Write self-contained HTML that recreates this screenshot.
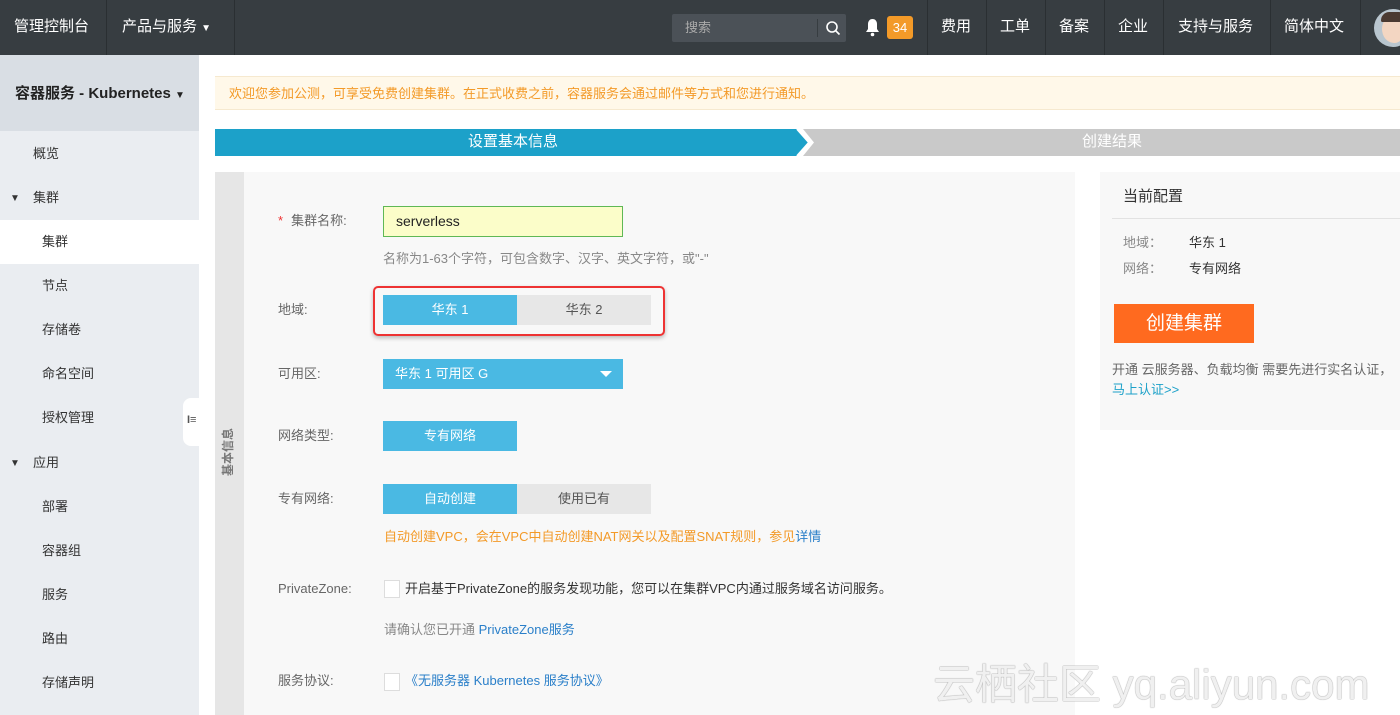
<!DOCTYPE html>
<html><head><meta charset="utf-8"><style>
*{margin:0;padding:0;box-sizing:border-box}
body{width:1400px;height:715px;overflow:hidden;position:relative;background:#fff;font-family:"Liberation Sans","Noto Sans CJK SC",sans-serif;font-size:13px;color:#333;line-height:1.2}
.a{position:absolute}
.top{left:0;top:0;width:1400px;height:55px;background:#373d41;color:#fff;font-size:15px}
.top .t{position:absolute;top:18px;white-space:nowrap}
.dv{position:absolute;top:0;width:1px;height:55px;background:#2a2f32}
.side{left:0;top:55px;width:199px;height:660px;background:#eaedf1}
.si{position:absolute;left:42px;font-size:13px;color:#333}
.lab{position:absolute;left:278px;color:#666;font-size:13px}
.btn{position:absolute;height:30px;line-height:30px;text-align:center;font-size:13px}
.bl{background:#4ab9e3;color:#fff}
.gr{background:#e7e7e7;color:#555}
</style></head><body>
<div class="a top">
 <div class="t" style="left:14px">管理控制台</div>
 <div class="dv" style="left:106px"></div>
 <div class="t" style="left:122px">产品与服务 <span style="font-size:10px">▼</span></div>
 <div class="dv" style="left:234px"></div>
 <div class="a" style="left:672px;top:14px;width:174px;height:28px;background:#4b5157;border-radius:2px"></div>
 <div class="t" style="left:685px;top:20px;font-size:13px;color:#aaa">搜索</div>
 <div class="a" style="left:817px;top:19px;width:1px;height:18px;background:#373d41"></div>
 <svg class="a" style="left:825px;top:20px" width="16" height="16" viewBox="0 0 16 16"><circle cx="7" cy="7" r="5" fill="none" stroke="#fff" stroke-width="1.6"/><path d="M11 11l3.5 3.5" stroke="#fff" stroke-width="1.6"/></svg>
 <svg class="a" style="left:865px;top:18px" width="15" height="19" viewBox="0 0 15 19"><path d="M7.5 1c-3 0-4.5 2.5-4.5 5v5l-2 3h13l-2-3V6c0-2.5-1.5-5-4.5-5z" fill="#fff"/><circle cx="7.5" cy="16.5" r="1.8" fill="#fff"/></svg>
 <div class="a" style="left:887px;top:16px;width:26px;height:23px;background:#f39a28;border-radius:3px;font-size:13px;text-align:center;line-height:23px">34</div>
 <div class="dv" style="left:927px"></div>
 <div class="t" style="left:941px">费用</div>
 <div class="dv" style="left:986px"></div>
 <div class="t" style="left:1000px">工单</div>
 <div class="dv" style="left:1045px"></div>
 <div class="t" style="left:1059px">备案</div>
 <div class="dv" style="left:1104px"></div>
 <div class="t" style="left:1118px">企业</div>
 <div class="dv" style="left:1163px"></div>
 <div class="t" style="left:1178px">支持与服务</div>
 <div class="dv" style="left:1270px"></div>
 <div class="t" style="left:1284px">简体中文</div>
 <div class="dv" style="left:1360px"></div>
 <div class="a" style="left:1374px;top:9px;width:38px;height:38px;border-radius:50%;background:#b9c6cf;overflow:hidden"><div class="a" style="left:8px;top:6px;width:24px;height:28px;border-radius:50%;background:#f3d6c2"></div><div class="a" style="left:7px;top:3px;width:26px;height:10px;border-radius:10px 10px 2px 2px;background:#4a3a32"></div></div>
</div>

<div class="a side">
 <div class="a" style="left:0;top:0;width:199px;height:76px;background:#d9dee4"></div>
 <div class="a" style="left:15px;top:30px;font-size:15px;font-weight:bold;color:#222">容器服务 - Kubernetes <span style="font-size:10px">▼</span></div>
 <div class="si" style="left:33px;top:91px">概览</div>
 <div class="si" style="left:10px;top:138px;font-size:10px">▼</div>
 <div class="si" style="left:33px;top:135px">集群</div>
 <div class="a" style="left:0;top:165px;width:199px;height:44px;background:#fff"></div>
 <div class="si" style="top:179px">集群</div>
 <div class="si" style="top:223px">节点</div>
 <div class="si" style="top:267px">存储卷</div>
 <div class="si" style="top:311px">命名空间</div>
 <div class="si" style="top:355px">授权管理</div>
 <div class="si" style="left:10px;top:403px;font-size:10px">▼</div>
 <div class="si" style="left:33px;top:400px">应用</div>
 <div class="si" style="top:444px">部署</div>
 <div class="si" style="top:488px">容器组</div>
 <div class="si" style="top:532px">服务</div>
 <div class="si" style="top:576px">路由</div>
 <div class="si" style="top:620px">存储声明</div>
</div>
<div class="a" style="left:183px;top:398px;width:16px;height:48px;background:#fff;border-radius:8px 0 0 8px"></div>
<div class="a" style="left:187px;top:414px;font-size:11px;font-weight:bold;color:#555">I≡</div>

<div class="a" style="left:215px;top:76px;width:1185px;height:34px;background:#fff8e9;border-top:1px solid #f6e9cf;border-bottom:1px solid #f6e9cf;color:#f39a28;font-size:13px;line-height:33px;padding-left:14px">欢迎您参加公测，可享受免费创建集群。在正式收费之前，容器服务会通过邮件等方式和您进行通知。</div>

<svg class="a" style="left:215px;top:129px" width="1185" height="27"><polygon points="0,0 582,0 594,13.5 582,27 0,27" fill="#1ca1c9"/><polygon points="588,0 1185,0 1185,27 588,27 599,13.5" fill="#c9c9c9"/><polyline points="582,0 594,13.5 582,27" fill="none" stroke="#fff" stroke-width="2"/></svg>
<div class="a" style="left:468px;top:133px;font-size:15px;color:#fff">设置基本信息</div>
<div class="a" style="left:1082px;top:133px;font-size:15px;color:#fff">创建结果</div>

<div class="a" style="left:215px;top:172px;width:860px;height:543px;background:#f8f8f8"></div>
<div class="a" style="left:215px;top:172px;width:29px;height:543px;background:#e6e6e6"></div>
<div class="a" style="left:221px;top:428px;font-size:12px;color:#777;font-weight:bold;writing-mode:vertical-rl;text-orientation:sideways;transform:rotate(180deg);white-space:nowrap">基本信息</div>

<div class="lab" style="top:213px"><span style="color:#e33;margin-right:8px">*</span>集群名称:</div>
<div class="a" style="left:383px;top:206px;width:240px;height:31px;background:#fbfdc9;border:1px solid #5fb855;padding-left:12px;line-height:29px;font-size:14px;color:#222">serverless</div>
<div class="a" style="left:383px;top:251px;color:#888">名称为1-63个字符，可包含数字、汉字、英文字符，或"-"</div>

<div class="lab" style="top:302px">地域:</div>
<div class="a" style="left:373px;top:286px;width:292px;height:50px;border:2px solid #e33;border-radius:5px;box-shadow:0 2px 4px rgba(0,0,0,.25)"></div>
<div class="btn bl" style="left:383px;top:295px;width:134px">华东 1</div>
<div class="btn gr" style="left:517px;top:295px;width:134px">华东 2</div>

<div class="lab" style="top:366px">可用区:</div>
<div class="btn bl" style="left:383px;top:359px;width:240px;text-align:left;padding-left:12px">华东 1 可用区 G</div>
<div class="a" style="left:600px;top:371px;width:0;height:0;border-left:6px solid transparent;border-right:6px solid transparent;border-top:6px solid #fff"></div>

<div class="lab" style="top:428px">网络类型:</div>
<div class="btn bl" style="left:383px;top:421px;width:134px">专有网络</div>

<div class="lab" style="top:491px">专有网络:</div>
<div class="btn bl" style="left:383px;top:484px;width:134px">自动创建</div>
<div class="btn gr" style="left:517px;top:484px;width:134px">使用已有</div>
<div class="a" style="left:384px;top:529px;color:#f39a28">自动创建VPC，会在VPC中自动创建NAT网关以及配置SNAT规则，参见<span style="color:#2a7fc9">详情</span></div>

<div class="lab" style="top:581px">PrivateZone:</div>
<div class="a" style="left:384px;top:580px;width:16px;height:18px;background:#fff;border:1px solid #ddd"></div>
<div class="a" style="left:405px;top:581px;color:#333">开启基于PrivateZone的服务发现功能，您可以在集群VPC内通过服务域名访问服务。</div>
<div class="a" style="left:384px;top:622px;color:#888">请确认您已开通 <span style="color:#2a7fc9">PrivateZone服务</span></div>

<div class="lab" style="top:673px">服务协议:</div>
<div class="a" style="left:384px;top:673px;width:16px;height:18px;background:#fff;border:1px solid #ddd"></div>
<div class="a" style="left:405px;top:673px;color:#2a7fc9">《无服务器 Kubernetes 服务协议》</div>

<div class="a" style="left:1100px;top:172px;width:300px;height:258px;background:#f8f8f8"></div>
<div class="a" style="left:1123px;top:188px;font-size:15px;color:#333">当前配置</div>
<div class="a" style="left:1112px;top:218px;width:288px;height:1px;background:#e2e2e2"></div>
<div class="a" style="left:1123px;top:235px;color:#888">地域：</div>
<div class="a" style="left:1189px;top:235px;color:#333">华东 1</div>
<div class="a" style="left:1123px;top:261px;color:#888">网络：</div>
<div class="a" style="left:1189px;top:261px;color:#333">专有网络</div>
<div class="a" style="left:1114px;top:304px;width:140px;height:39px;background:#ff6a1f;color:#fff;font-size:19px;text-align:center;line-height:39px">创建集群</div>
<div class="a" style="left:1112px;top:362px;color:#666;white-space:nowrap">开通 云服务器、负载均衡 需要先进行实名认证，</div>
<div class="a" style="left:1112px;top:382px;color:#1ca1c9">马上认证&gt;&gt;</div>

<div class="a" style="left:933px;top:660px;font-size:42px;color:rgba(255,255,255,.85);text-shadow:0 0 1px #999,0 0 1px #999;white-space:nowrap">云栖社区 yq.aliyun.com</div>
</body></html>
